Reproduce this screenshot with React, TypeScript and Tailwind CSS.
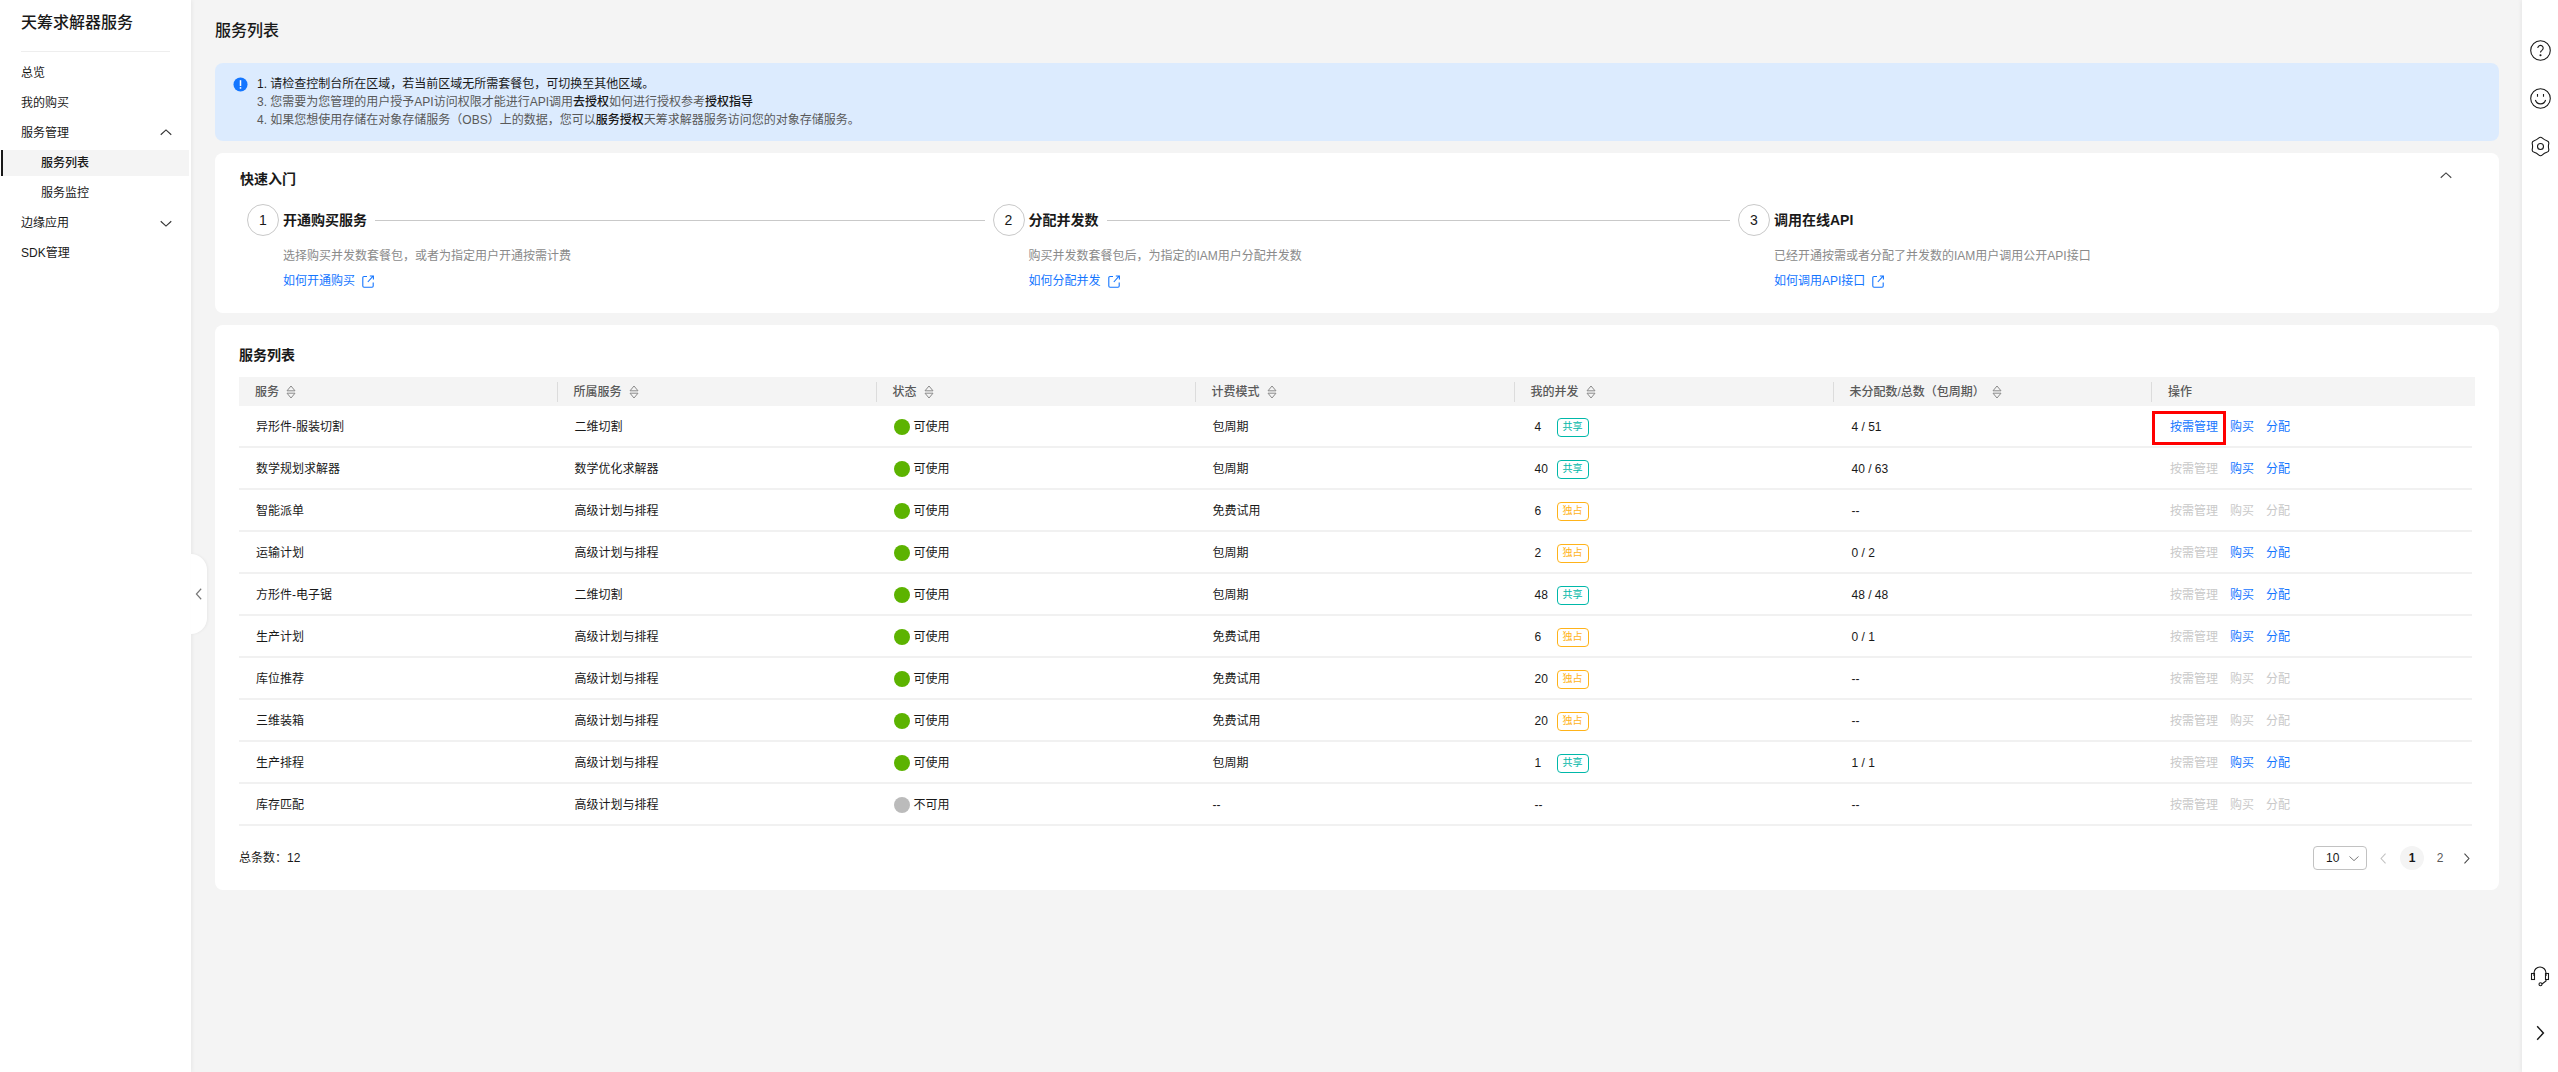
import React from "react";

const FONT = "font-['Liberation_Sans','Noto_Sans_CJK_SC',sans-serif]";

function Chevron({ dir, className = "" }: { dir: "up" | "down" | "left" | "right"; className?: string }) {
  const d = {
    up: "M2 10 L8 4.5 L14 10",
    down: "M2 6 L8 11.5 L14 6",
    left: "M10.5 2 L5 8 L10.5 14",
    right: "M5.5 2 L11 8 L5.5 14",
  }[dir];
  return (
    <svg viewBox="0 0 16 16" fill="none" stroke="currentColor" strokeWidth="1.3" className={className}>
      <path d={d} />
    </svg>
  );
}

function Sort() {
  return (
    <svg viewBox="0 0 10 14" className="ml-[7px] h-[14px] w-[10px] shrink-0" fill="none" stroke="#8a8a8a" strokeWidth="1">
      <path d="M5 1 L9 5.8 H1 Z" />
      <path d="M5 13 L9 8.2 H1 Z" />
    </svg>
  );
}

function ExtLink() {
  return (
    <svg viewBox="0 0 12 13" className="ml-[7px] h-[13px] w-[12px]" fill="none" stroke="currentColor" strokeWidth="1.1">
      <path d="M5 1.5 H2 a1.2 1.2 0 0 0 -1.2 1.2 V11 a1.2 1.2 0 0 0 1.2 1.2 H10 a1.2 1.2 0 0 0 1.2 -1.2 V7.5" />
      <path d="M5.8 7 L11 1.2 M7.8 1 H11.4 V4.5" />
    </svg>
  );
}

function gearPath() {
  const pts: [number, number][] = [];
  for (let i = 0; i < 12; i++) {
    const a = ((i * 30 - 90) * Math.PI) / 180;
    const r = i % 2 === 0 ? 10.2 : 7.6;
    pts.push([10.5 + r * Math.cos(a), 10.5 + r * Math.sin(a)]);
  }
  const mid = (p: [number, number], q: [number, number]) => `${((p[0] + q[0]) / 2).toFixed(2)} ${((p[1] + q[1]) / 2).toFixed(2)}`;
  let d = `M${mid(pts[11], pts[0])}`;
  for (let i = 0; i < 12; i++) {
    d += ` Q${pts[i][0].toFixed(2)} ${pts[i][1].toFixed(2)} ${mid(pts[i], pts[(i + 1) % 12])}`;
  }
  return d + " Z";
}

const menu = [
  { t: "总览" },
  { t: "我的购买" },
  { t: "服务管理", c: "up" as const },
  { t: "服务列表", sub: true, active: true },
  { t: "服务监控", sub: true },
  { t: "边缘应用", c: "down" as const },
  { t: "SDK管理" },
];

type Row = {
  name: string;
  group: string;
  ok: boolean;
  mode: string;
  n: string;
  tag?: "共享" | "独占";
  alloc: string;
  manage?: boolean;
  buy: boolean;
};

const rows: Row[] = [
  { name: "异形件-服装切割", group: "二维切割", ok: true, mode: "包周期", n: "4", tag: "共享", alloc: "4 / 51", manage: true, buy: true },
  { name: "数学规划求解器", group: "数学优化求解器", ok: true, mode: "包周期", n: "40", tag: "共享", alloc: "40 / 63", buy: true },
  { name: "智能派单", group: "高级计划与排程", ok: true, mode: "免费试用", n: "6", tag: "独占", alloc: "--", buy: false },
  { name: "运输计划", group: "高级计划与排程", ok: true, mode: "包周期", n: "2", tag: "独占", alloc: "0 / 2", buy: true },
  { name: "方形件-电子锯", group: "二维切割", ok: true, mode: "包周期", n: "48", tag: "共享", alloc: "48 / 48", buy: true },
  { name: "生产计划", group: "高级计划与排程", ok: true, mode: "免费试用", n: "6", tag: "独占", alloc: "0 / 1", buy: true },
  { name: "库位推荐", group: "高级计划与排程", ok: true, mode: "免费试用", n: "20", tag: "独占", alloc: "--", buy: false },
  { name: "三维装箱", group: "高级计划与排程", ok: true, mode: "免费试用", n: "20", tag: "独占", alloc: "--", buy: false },
  { name: "生产排程", group: "高级计划与排程", ok: true, mode: "包周期", n: "1", tag: "共享", alloc: "1 / 1", buy: true },
  { name: "库存匹配", group: "高级计划与排程", ok: false, mode: "--", n: "--", alloc: "--", buy: false },
];

const headers: { t: string; sort: boolean }[] = [
  { t: "服务", sort: true },
  { t: "所属服务", sort: true },
  { t: "状态", sort: true },
  { t: "计费模式", sort: true },
  { t: "我的并发", sort: true },
  { t: "未分配数/总数（包周期）", sort: true },
  { t: "操作", sort: false },
];

const GRID = "grid grid-cols-[318.5px_319px_319px_319px_319px_318.5px_1fr]";

const steps = [
  { n: "1", t: "开通购买服务", d: "选择购买并发数套餐包，或者为指定用户开通按需计费", l: "如何开通购买" },
  { n: "2", t: "分配并发数", d: "购买并发数套餐包后，为指定的IAM用户分配并发数", l: "如何分配并发" },
  { n: "3", t: "调用在线API", d: "已经开通按需或者分配了并发数的IAM用户调用公开API接口", l: "如何调用API接口" },
];

export default function App() {
  return (
    <div className={`${FONT} relative flex h-[1072px] w-[2558px] overflow-hidden bg-[#f4f4f4] text-xs text-[#191919]`}>
      {/* left nav */}
      <aside className="relative z-10 flex w-[191px] shrink-0 flex-col bg-white shadow-[1px_0_4px_rgba(0,0,0,0.06)]">
        <div className="mx-[21px] flex h-[52px] items-center border-b border-[#eeeeee] pb-[5px] text-base font-medium leading-none text-[#191919]">
          天筹求解器服务
        </div>
        <nav className="mt-[6px] flex flex-col">
          {menu.map((m) =>
            m.active ? (
              <div key={m.t} className="my-[2px] ml-px mr-[2px] flex h-[26px] items-center border-l-2 border-[#191919] bg-[#f4f4f4] pl-[38px] font-medium">
                {m.t}
              </div>
            ) : (
              <div key={m.t} className={`flex h-[30px] items-center justify-between ${m.sub ? "pl-[41px]" : "pl-[21px]"}`}>
                <span>{m.t}</span>
                {m.c && <Chevron dir={m.c} className="mr-[18px] h-[14px] w-[14px] text-[#333333]" />}
              </div>
            )
          )}
        </nav>
      </aside>

      {/* collapse handle */}
      <div className="absolute left-[191px] top-[554px] z-20 flex h-[80px] w-[16px] items-center justify-center rounded-r-[16px] bg-white shadow-[1px_0_3px_rgba(0,0,0,0.05)]">
        <Chevron dir="left" className="h-[14px] w-[14px] text-[#777777]" />
      </div>

      {/* main */}
      <main className="flex min-w-0 flex-1 flex-col pl-[24px] pr-[23px]">
        <h1 className="flex h-[63px] items-center pb-[2px] text-base font-medium text-[#191919]">服务列表</h1>

        <div className="flex h-[78px] gap-[8px] rounded-lg bg-[#dcebfe] pl-[18px] pt-[12px] leading-[18px] text-[#595959]">
          <svg viewBox="0 0 16 16" className="mt-[2px] h-[15px] w-[15px] shrink-0">
            <circle cx="8" cy="8" r="7.5" fill="#1476ff" />
            <rect x="7.2" y="3.4" width="1.6" height="6.2" fill="#fff" />
            <rect x="7.2" y="10.8" width="1.6" height="1.7" fill="#fff" />
          </svg>
          <div className="pl-[1px]">
            <div className="text-[#191919]">1. 请检查控制台所在区域，若当前区域无所需套餐包，可切换至其他区域。</div>
            <div>
              3. 您需要为您管理的用户授予API访问权限才能进行API调用<b className="font-medium text-[#191919]">去授权</b>如何进行授权参考<b className="font-medium text-[#191919]">授权指导</b>
            </div>
            <div>
              4. 如果您想使用存储在对象存储服务（OBS）上的数据，您可以<b className="font-medium text-[#191919]">服务授权</b>天筹求解器服务访问您的对象存储服务。
            </div>
          </div>
        </div>

        <section className="mt-[12px] h-[160px] rounded-lg bg-white pl-[25px] pr-[32px] pt-[17px]">
          <div className="flex h-[18px] items-center justify-between">
            <h2 className="text-sm font-semibold">快速入门</h2>
            <Chevron dir="up" className="-mt-[6px] mr-[14px] h-[14px] w-[14px] text-[#444444]" />
          </div>
          <div className="ml-[7px] mt-[16px] grid grid-cols-[745.5px_745.5px_1fr]">
            {steps.map((s, i) => (
              <div key={s.n} className="flex flex-col">
                <div className="flex h-[32px] items-center">
                  <div className="flex h-[32px] w-[32px] shrink-0 items-center justify-center rounded-full border border-[#c9c9c9] text-sm">
                    {s.n}
                  </div>
                  <div className="ml-[4px] text-sm font-semibold">{s.t}</div>
                  {i < 2 && <div className="mx-[8px] h-px flex-1 bg-[#c9c9c9]" />}
                </div>
                <div className="ml-[36px] mt-[11px] leading-[18px] text-[#8a8a8a]">{s.d}</div>
                <div className="ml-[36px] mt-[7px] flex items-center leading-[18px] text-[#1476ff]">
                  {s.l}
                  <ExtLink />
                </div>
              </div>
            ))}
          </div>
        </section>

        <section className="relative mt-[12px] h-[565px] rounded-lg bg-white px-[24px] pt-[21px]">
          <h2 className="h-[31px] text-sm font-semibold leading-[18px]">服务列表</h2>
          <div className={`${GRID} h-[29px] items-center bg-[#f4f4f4] text-[#595959]`}>
            {headers.map((h, i) => (
              <div key={h.t} className={`flex h-[20px] items-center pl-[16px] ${i < 6 ? "border-r border-[#dcdcdc]" : ""}`}>
                <span className="font-medium">{h.t}</span>
                {h.sort && <Sort />}
              </div>
            ))}
          </div>
          <div className="mr-[3px]">
            {rows.map((r) => (
              <div key={r.name} className={`${GRID} h-[42px] items-center border-b-2 border-[#f1f1f1] pt-[2px]`}>
                <div className="pl-[17px]">{r.name}</div>
                <div className="pl-[17px]">{r.group}</div>
                <div className="flex items-center pl-[17px]">
                  <span className={`mr-[4px] h-[16px] w-[16px] rounded-full ${r.ok ? "bg-[#5cb300]" : "bg-[#bbbbbb]"}`} />
                  {r.ok ? "可使用" : "不可用"}
                </div>
                <div className="pl-[17px]">{r.mode}</div>
                <div className="flex items-center pl-[20px]">
                  <span className="w-[22px]">{r.n}</span>
                  {r.tag && (
                    <span
                      className={`flex h-[19px] w-[32px] items-center justify-center rounded-[4px] border text-[10px] ${
                        r.tag === "共享" ? "border-[#00b8a9] text-[#00b8a9]" : "border-[#ffb31a] text-[#ffb31a]"
                      }`}
                    >
                      {r.tag}
                    </span>
                  )}
                </div>
                <div className="pl-[18px]">{r.alloc}</div>
                <div className={`flex items-center gap-[12px] pl-[18px] ${r.buy ? "text-[#1476ff]" : "text-[#c9c9c9]"}`}>
                  <span className={r.manage ? "text-[#1476ff]" : "text-[#c9c9c9]"}>按需管理</span>
                  <span>购买</span>
                  <span>分配</span>
                </div>
              </div>
            ))}
          </div>

          {/* annotation box */}
          <div className="absolute left-[1937px] top-[86px] h-[34px] w-[74px] border-[3px] border-[#ff0000]" />

          <div className="mt-[20px] flex h-[24px] items-center justify-between">
            <div>总条数：12</div>
            <div className="mr-[2px] flex items-center">
              <div className="flex h-[24px] w-[54px] items-center justify-between rounded-[4px] border border-[#c2c2c2] pl-[12px] pr-[6px]">
                <span>10</span>
                <Chevron dir="down" className="h-[12px] w-[12px] text-[#777777]" />
              </div>
              <Chevron dir="left" className="ml-[10px] h-[13px] w-[13px] text-[#c2c2c2]" />
              <div className="ml-[10px] flex h-[24px] w-[24px] items-center justify-center rounded-full bg-[#f4f4f4] font-semibold">1</div>
              <div className="flex h-[24px] w-[32px] items-center justify-center text-[#595959]">2</div>
              <Chevron dir="right" className="ml-[4px] h-[13px] w-[13px] text-[#444444]" />
            </div>
          </div>
        </section>
      </main>

      {/* right rail */}
      <aside className="flex w-[36px] shrink-0 flex-col items-center bg-white pt-[40px] shadow-[-1px_0_4px_rgba(0,0,0,0.06)]">
        <svg viewBox="0 0 21 21" className="h-[21px] w-[21px]" fill="none" stroke="#191919" strokeWidth="1.1">
          <circle cx="10.5" cy="10.5" r="9.8" />
          <path d="M7.8 8 a2.7 2.7 0 1 1 4.1 2.4 c-1 .5-1.4 1.1-1.4 2.2" />
          <circle cx="10.5" cy="15.3" r="0.5" fill="#191919" />
        </svg>
        <svg viewBox="0 0 21 21" className="mt-[27px] h-[21px] w-[21px]" fill="none" stroke="#191919" strokeWidth="1.1">
          <circle cx="10.5" cy="10.5" r="9.8" />
          <path d="M5.4 12 a5.3 5.3 0 0 0 10.2 0" />
          <path d="M7.5 6 V8.8 M13.5 6 V8.8" />
        </svg>
        <svg viewBox="0 0 21 21" className="mt-[27px] h-[21px] w-[21px]" fill="none" stroke="#191919" strokeWidth="1.1">
          <path d={gearPath()} strokeLinejoin="round" />
          <circle cx="10.5" cy="10.5" r="3" />
        </svg>
        <svg viewBox="0 0 22 22" className="mt-auto h-[22px] w-[22px]" fill="none" stroke="#191919" strokeWidth="1.1">
          <path d="M5 11 V8 a6 6 0 0 1 12 0 V11" />
          <rect x="2.5" y="8.5" width="3" height="6" />
          <rect x="16.5" y="8.5" width="3" height="6" />
          <path d="M17 14.5 V16 L13 19" />
          <circle cx="11.5" cy="19.2" r="1.5" />
        </svg>
        <Chevron dir="right" className="mb-[30px] mt-[37px] h-[18px] w-[18px] text-[#191919]" />
      </aside>
    </div>
  );
}
